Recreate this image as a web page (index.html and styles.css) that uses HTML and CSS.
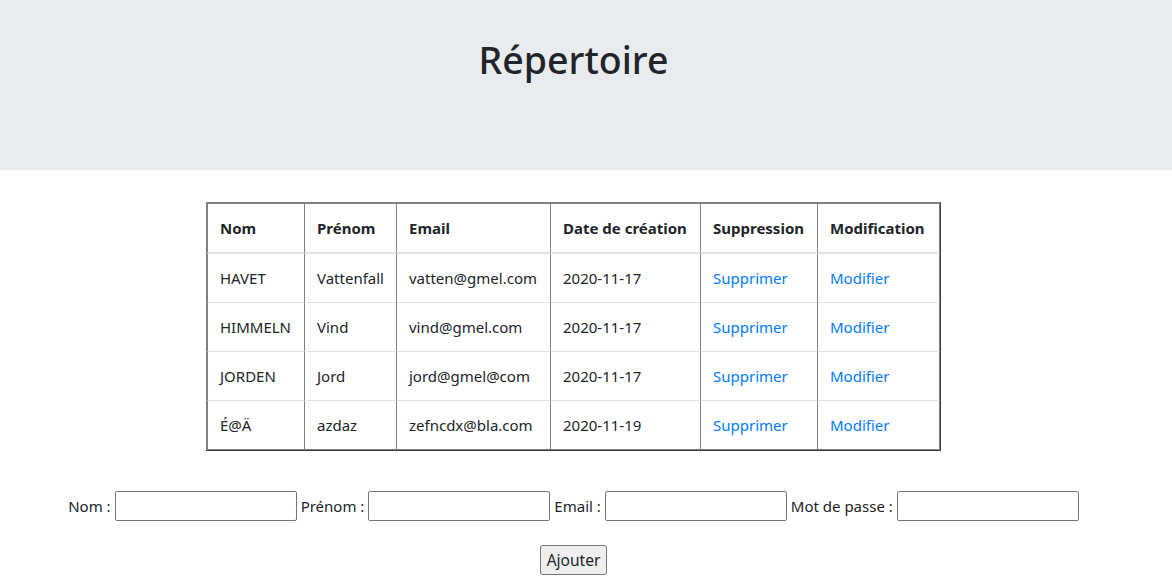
FILE: index.html
```html
<!DOCTYPE html>
<html lang="fr">
<head>
<meta charset="utf-8">
<title>Répertoire</title>
<link rel="stylesheet" href="styles.css">
</head>
<body>
<header class="jumbotron">
  <h1 class="title">Répertoire</h1>
</header>
<main class="page">
  <div class="table-wrap">
    <table class="dir-table">
      <thead>
        <tr>
          <th class="c1">Nom</th>
          <th class="c2">Prénom</th>
          <th class="c3">Email</th>
          <th class="c4">Date de création</th>
          <th class="c5">Suppression</th>
          <th class="c6">Modification</th>
        </tr>
      </thead>
      <tbody>
        <tr>
          <td>HAVET</td><td>Vattenfall</td><td>vatten@gmel.com</td><td>2020-11-17</td>
          <td><a href="#" class="link">Supprimer</a></td><td><a href="#" class="link">Modifier</a></td>
        </tr>
        <tr>
          <td>HIMMELN</td><td>Vind</td><td>vind@gmel.com</td><td>2020-11-17</td>
          <td><a href="#" class="link">Supprimer</a></td><td><a href="#" class="link">Modifier</a></td>
        </tr>
        <tr>
          <td>JORDEN</td><td>Jord</td><td>jord@gmel@com</td><td>2020-11-17</td>
          <td><a href="#" class="link">Supprimer</a></td><td><a href="#" class="link">Modifier</a></td>
        </tr>
        <tr>
          <td>É@Ä</td><td>azdaz</td><td>zefncdx@bla.com</td><td>2020-11-19</td>
          <td><a href="#" class="link">Supprimer</a></td><td><a href="#" class="link">Modifier</a></td>
        </tr>
      </tbody>
    </table>
  </div>
  <form class="add-form">
    <div class="fields">
      <label class="lbl" for="nom">Nom :</label><input class="field" id="nom" type="text">
      <label class="lbl" for="prenom">Prénom :</label><input class="field" id="prenom" type="text">
      <label class="lbl" for="email">Email :</label><input class="field" id="email" type="text">
      <label class="lbl" for="mdp">Mot de passe :</label><input class="field" id="mdp" type="password">
    </div>
    <div class="actions">
      <button type="button" class="btn">Ajouter</button>
    </div>
  </form>
</main>
</body>
</html>
```
FILE: styles.css
```css
html, body {
  margin: 0;
  padding: 0;
  background: #fff;
}
body {
  font-family: "Noto Sans", "Open Sans", "DejaVu Sans", sans-serif;
  font-size: 15px;
  line-height: 24px;
  color: #212529;
}
.page {
  width: 1147px;
}
.jumbotron {
  background: #e9ecef;
  height: 170px;
  box-sizing: border-box;
  padding-top: 36px;
  margin-bottom: 32px;
}
.title {
  width: 1147px;
  margin: 0;
  text-align: center;
  font-size: 37.5px;
  line-height: 48px;
  font-weight: 500;
}
.table-wrap {
  width: 735px;
  box-sizing: border-box;
  margin: 0 auto;
  border: 1px solid;
  border-color: #808080 #3c3c3c #3c3c3c #808080;
}
.dir-table {
  width: 733px;
  table-layout: fixed;
  border-collapse: separate;
  border-spacing: 0;
}
.dir-table th,
.dir-table td {
  box-sizing: border-box;
  padding: 12px 12px;
  text-align: left;
  vertical-align: top;
  border-left: 1px solid #808080;
  white-space: nowrap;
  overflow: hidden;
}
.dir-table th:last-child,
.dir-table td:last-child {
  border-right: 1px solid #808080;
}
.dir-table th {
  font-weight: 700;
  border-top: 1px solid #808080;
  border-bottom: 2px solid #dee2e6;
}
.dir-table tbody tr + tr td {
  border-top: 1px solid #dee2e6;
}
.dir-table tbody tr:last-child td {
  border-bottom: 1px solid #808080;
}
.c1 { width: 97px; }
.c2 { width: 92px; }
.c3 { width: 154px; }
.c4 { width: 150px; }
.c5 { width: 117px; }
.c6 { width: 123px; }
.link {
  color: #007bff;
  text-decoration: none;
}
.add-form {
  margin-top: 40px;
}
.fields {
  display: flex;
  justify-content: center;
  align-items: center;
  gap: 4px;
}
.lbl {
  font-size: 15px;
}
.field {
  width: 182px;
  height: 30px;
  box-sizing: border-box;
  border: 1px solid #767676;
  border-radius: 2px;
  padding: 1px 2px;
  font: inherit;
  margin: 0;
  background: #fff;
}
.actions {
  display: flex;
  justify-content: center;
  margin-top: 24px;
}
.btn {
  width: 67px;
  height: 30px;
  box-sizing: border-box;
  border: 1px solid #767676;
  border-radius: 3px;
  background: #efefef;
  color: #212529;
  font-family: inherit;
  font-size: 15.5px;
  padding: 0;
  margin: 0;
}
```
